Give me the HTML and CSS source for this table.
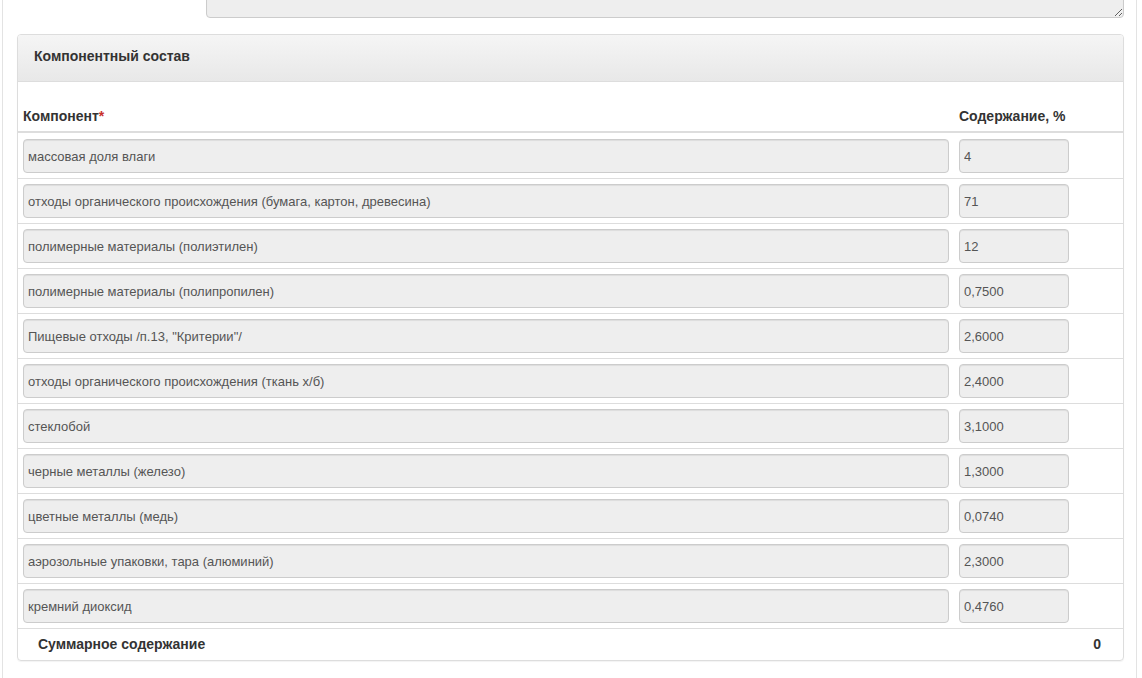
FILE: index.html
```html
<!DOCTYPE html>
<html lang="ru">
<head>
    <meta charset="UTF-8">
    <title>Компонентный состав</title>
    <link rel="stylesheet" href="styles.css">
</head>
<body>

    <div class="page">

        <!-- Примечание (прокручено вверх) -->
        <div class="form-row">
            <div class="form-label"></div>
            <textarea class="note" readonly></textarea>
        </div>

        <!-- Компонентный состав -->
        <div class="panel">
            <div class="panel-heading">Компонентный состав</div>

            <table class="components">
                <thead>
                    <tr>
                        <th class="col-name">Компонент<span class="required">*</span></th>
                        <th class="col-value">Содержание, %</th>
                        <th></th>
                    </tr>
                </thead>
                <tbody>
                    <tr><td><input class="field" value="массовая доля влаги" readonly></td><td><input class="field field-num" value="4" readonly></td><td></td></tr>
                    <tr><td><input class="field" value="отходы органического происхождения (бумага, картон, древесина)" readonly></td><td><input class="field field-num" value="71" readonly></td><td></td></tr>
                    <tr><td><input class="field" value="полимерные материалы (полиэтилен)" readonly></td><td><input class="field field-num" value="12" readonly></td><td></td></tr>
                    <tr><td><input class="field" value="полимерные материалы (полипропилен)" readonly></td><td><input class="field field-num" value="0,7500" readonly></td><td></td></tr>
                    <tr><td><input class="field" value='Пищевые отходы /п.13, "Критерии"/' readonly></td><td><input class="field field-num" value="2,6000" readonly></td><td></td></tr>
                    <tr><td><input class="field" value="отходы органического происхождения (ткань х/б)" readonly></td><td><input class="field field-num" value="2,4000" readonly></td><td></td></tr>
                    <tr><td><input class="field" value="стеклобой" readonly></td><td><input class="field field-num" value="3,1000" readonly></td><td></td></tr>
                    <tr><td><input class="field" value="черные металлы (железо)" readonly></td><td><input class="field field-num" value="1,3000" readonly></td><td></td></tr>
                    <tr><td><input class="field" value="цветные металлы (медь)" readonly></td><td><input class="field field-num" value="0,0740" readonly></td><td></td></tr>
                    <tr><td><input class="field" value="аэрозольные упаковки, тара (алюминий)" readonly></td><td><input class="field field-num" value="2,3000" readonly></td><td></td></tr>
                    <tr><td><input class="field" value="кремний диоксид" readonly></td><td><input class="field field-num" value="0,4760" readonly></td><td></td></tr>
                </tbody>
            </table>

            <div class="summary">
                <span>Суммарное содержание</span>
                <span>0</span>
            </div>
        </div>

    </div>

</body>
</html>
```

FILE: styles.css
```css
body {
    font-family: "Liberation Sans", Arial, sans-serif;
    font-size: 13px;
    color: #333;
    background-color: #fff;
    margin: 0;
}

.page {
    margin-left: 2px;
    width: 1107px;
    min-height: 678px;
    padding: 0 12px 0 14px;
    border-left: 1px solid #e3e3e3;
    border-right: 1px solid #e3e3e3;
    overflow: hidden;
}

.form-row {
    display: flex;
    margin-top: -40px;
}

.form-label {
    width: 189px;
    flex-shrink: 0;
}

.note {
    flex: 1;
    height: 58px;
    margin: 0;
    padding: 6px 8px;
    background-color: #eee;
    border: 1px solid #ccc;
    border-radius: 4px;
    box-shadow: inset 0 1px 1px rgba(0, 0, 0, 0.075);
    box-sizing: border-box;
    font-family: inherit;
}

.panel {
    margin-top: 16px;
    border: 1px solid #ddd;
    border-radius: 4px;
    box-shadow: 0 1px 1px rgba(0, 0, 0, 0.05);
}

.panel-heading {
    height: 47px;
    box-sizing: border-box;
    padding: 11px 16px;
    font-size: 14px;
    line-height: 20px;
    font-weight: bold;
    color: #333;
    background: linear-gradient(to bottom, #f5f5f5, #e8e8e8);
    border-bottom: 1px solid #ddd;
    border-radius: 3px 3px 0 0;
}

.components {
    width: 100%;
    margin-top: 15px;
    border-collapse: collapse;
}

.components th {
    text-align: left;
    font-size: 14px;
    font-weight: bold;
    padding: 9px 5px 5px 5px;
    line-height: 20px;
    border-bottom: 2px solid #ddd;
}

.col-name {
    width: 926px;
}

.col-value {
    width: 110px;
}

.required {
    color: #c9302c;
}

.components td {
    padding: 5px 5px;
    border-top: 1px solid #ddd;
}

.components tbody tr:first-child td {
    border-top: none;
    padding-top: 6px;
}

.field {
    display: block;
    width: 100%;
    height: 34px;
    box-sizing: border-box;
    margin: 0;
    padding: 6px 4px;
    font-family: inherit;
    font-size: 13px;
    color: #555;
    background-color: #eee;
    border: 1px solid #ccc;
    border-radius: 4px;
    box-shadow: inset 0 1px 1px rgba(0, 0, 0, 0.075);
    outline: none;
}

.field-num {
    width: 110px;
}

.summary {
    display: flex;
    justify-content: space-between;
    padding: 7px 22px 7px 20px;
    line-height: 17px;
    font-size: 14px;
    font-weight: bold;
    border-top: 1px solid #ddd;
}
```
